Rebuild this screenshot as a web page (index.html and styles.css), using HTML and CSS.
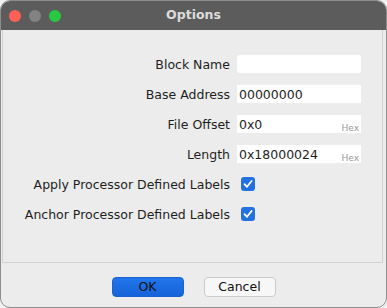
FILE: index.html
```html
<!DOCTYPE html>
<html>
<head>
<meta charset="utf-8">
<link rel="stylesheet" href="styles.css">
</head>
<body>
<div class="window">
  <div class="titlebar">
    <div class="lights">
      <span class="light red"></span>
      <span class="light gray"></span>
      <span class="light green"></span>
    </div>
    <div class="title">Options</div>
  </div>
  <div class="panel">
    <div class="form">
      <label class="lbl">Block Name</label>
      <div class="field rounded"></div>
      <label class="lbl">Base Address</label>
      <div class="field">00000000</div>
      <label class="lbl">File Offset</label>
      <div class="field">0x0<span class="hex">Hex</span></div>
      <label class="lbl">Length</label>
      <div class="field">0x18000024<span class="hex">Hex</span></div>
      <label class="lbl">Apply Processor Defined Labels</label>
      <div class="check"><svg viewBox="0 0 14 14" width="14" height="14"><rect x="0" y="0" width="14" height="14" rx="3" fill="#2370e3"/><path d="M3.5 7.2 L6 9.8 L10.6 4" fill="none" stroke="#fff" stroke-width="1.8" stroke-linecap="round" stroke-linejoin="round"/></svg></div>
      <label class="lbl">Anchor Processor Defined Labels</label>
      <div class="check"><svg viewBox="0 0 14 14" width="14" height="14"><rect x="0" y="0" width="14" height="14" rx="3" fill="#2370e3"/><path d="M3.5 7.2 L6 9.8 L10.6 4" fill="none" stroke="#fff" stroke-width="1.8" stroke-linecap="round" stroke-linejoin="round"/></svg></div>
    </div>
  </div>
  <div class="footer">
    <button class="btn ok">OK</button>
    <button class="btn cancel">Cancel</button>
  </div>
</div>
</body>
</html>
```
FILE: styles.css
```css
html, body {
  margin: 0;
  padding: 0;
  background: #f2f2f2;
}
body {
  font-family: "DejaVu Sans", "Noto Sans", sans-serif;
  font-size: 12.5px;
  color: #1e1e1e;
}
.window {
  width: 385px;
  height: 306px;
  border: 1px solid #8e8e8e;
  border-radius: 10px;
  background: #ececec;
  overflow: hidden;
  display: flex;
  flex-direction: column;
}
.titlebar {
  height: 29px;
  background: #5c5c5c;
  display: flex;
  align-items: center;
  position: relative;
  flex: none;
}
.lights {
  display: flex;
  gap: 8px;
  padding-left: 8px;
}
.light {
  width: 12px;
  height: 12px;
  border-radius: 50%;
}
.red { background: #fe5f57; }
.gray { background: #838383; }
.green { background: #28c840; }
.title {
  position: absolute;
  left: 0;
  right: 0;
  text-align: center;
  font-weight: bold;
  color: #dcdcdc;
  font-size: 12.5px;
  top: 6px;
}
.panel {
  margin: 0 3px 0 1px;
  height: 232px;
  border: 1px solid #d2d2d2;
  border-top: none;
  flex: none;
}
.form {
  display: grid;
  grid-template-columns: 227px 124px;
  column-gap: 7px;
  row-gap: 12px;
  padding-top: 25px;
}
.lbl {
  text-align: right;
  height: 18px;
  line-height: 19px;
  white-space: nowrap;
}
.field {
  height: 18px;
  line-height: 19px;
  background: #fff;
  padding: 0 2px;
  position: relative;
  box-sizing: border-box;
}
.field.rounded { border-radius: 3px; }
.hex {
  position: absolute;
  right: 2px;
  bottom: 0;
  font-size: 9px;
  line-height: 10px;
  color: #9a9a9a;
}
.check {
  height: 18px;
  display: flex;
  align-items: center;
  padding-left: 4px;
}
.check svg { display: block; }
.footer {
  flex: 1;
  display: flex;
  justify-content: center;
  align-items: center;
  gap: 20px;
  padding-top: 3px;
}
.btn {
  width: 72px;
  height: 20px;
  border-radius: 4px;
  font-family: inherit;
  font-size: 12.5px;
  color: #111;
  padding: 0;
  line-height: 18px;
}
.ok {
  background: linear-gradient(#2275ea, #1663d8);
  border: 1px solid #1a62cf;
}
.cancel {
  background: #f7f7f7;
  border: 1px solid #cacaca;
}
```
